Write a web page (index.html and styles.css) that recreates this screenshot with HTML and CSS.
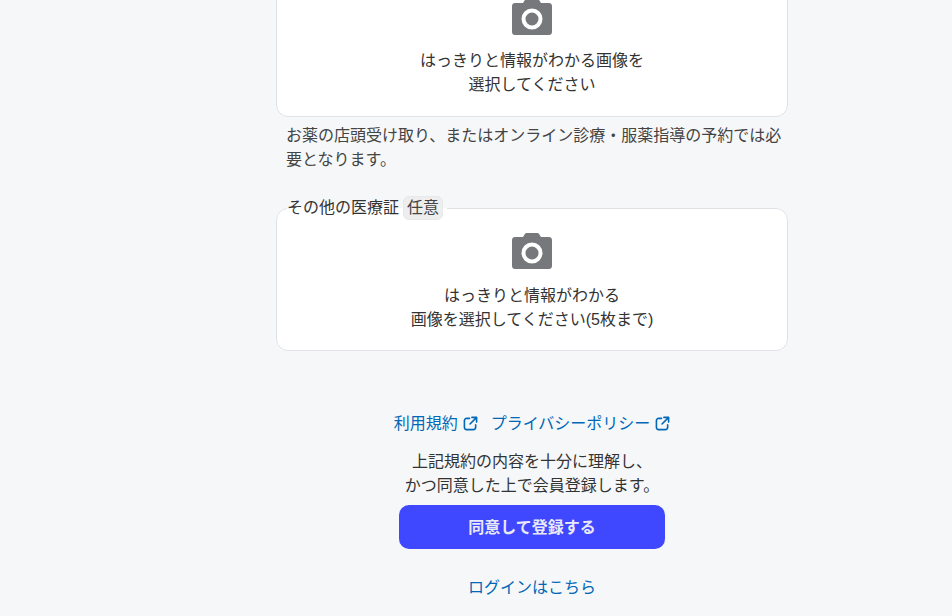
FILE: index.html
```html
<!DOCTYPE html>
<html lang="ja">
<head>
  <meta charset="UTF-8">
  <title>会員登録</title>
  <link rel="stylesheet" href="styles.css">
</head>
<body>
  <svg class="icon-defs" width="0" height="0" aria-hidden="true">
    <symbol id="camera" viewBox="0 0 40 36">
      <path fill-rule="evenodd" d="M3 4h8l1.600-2.600C13.200.5 14 0 15 0h10c1 0 1.800.5 2.400 1.400L29 4h8c1.700 0 3 1.300 3 3v26c0 1.700-1.300 3-3 3H3c-1.700 0-3-1.300-3-3V7c0-1.700 1.300-3 3-3zm17 5.500a10.500 10.500 0 1 0 0 21 10.500 10.500 0 0 0 0-21zm0 4a6.500 6.500 0 1 1 0 13 6.500 6.500 0 0 1 0-13z"/>
    </symbol>
    <symbol id="external" viewBox="0 0 16 16">
      <path fill="none" stroke="currentColor" stroke-width="1.700" stroke-linecap="round" stroke-linejoin="round" d="M7 2.500H4A2.500 2.500 0 0 0 1.500 5v7A2.500 2.500 0 0 0 4 14.500h7a2.500 2.500 0 0 0 2.500-2.500V9.500M9.500 1.500h5v5M14.500 1.500L7.500 8.500"/>
    </symbol>
  </svg>

  <main class="page">
    <fieldset class="upload upload-first">
      <svg class="camera"><use href="#camera"></use></svg>
      <p class="upload-text">はっきりと情報がわかる画像を<br>選択してください</p>
    </fieldset>
    <p class="note">お薬の店頭受け取り、またはオンライン診療・服薬指導の予約では必要となります。</p>

    <fieldset class="upload upload-other">
      <legend class="upload-label">その他の医療証<span class="tag">任意</span></legend>
      <svg class="camera"><use href="#camera"></use></svg>
      <p class="upload-text">はっきりと情報がわかる<br>画像を選択してください(5枚まで)</p>
    </fieldset>

    <div class="terms">
      <div class="terms-links">
        <a class="link" href="#">利用規約<svg class="external"><use href="#external"></use></svg></a>
        <a class="link" href="#">プライバシーポリシー<svg class="external"><use href="#external"></use></svg></a>
      </div>
      <p class="terms-text">上記規約の内容を十分に理解し、<br>かつ同意した上で会員登録します。</p>
      <button class="submit" type="button">同意して登録する</button>
      <a class="link login" href="#">ログインはこちら</a>
    </div>
  </main>
</body>
</html>
```

FILE: styles.css
```css
html, body {
  height: 100%;
  overflow: hidden;
}
body {
  margin: 0;
  padding-left: 276px;
  background: #f6f7f9;
  color: #333;
  font-family: "Liberation Sans", "Noto Sans CJK JP", sans-serif;
  font-size: 16px;
  line-height: 24px;
}
.icon-defs {
  position: absolute;
}
.page {
  width: 512px;
  margin-top: -26px;
}
.upload {
  margin: 0;
  padding: 25px 10px 18px;
  min-width: 0;
  border: 1px solid #e0e2e6;
  border-radius: 12px;
  background: #fff;
}
.upload-first {
  padding-top: 24px;
  padding-bottom: 19px;
}
.upload-other {
  margin-top: 24px;
  padding-top: 13px;
}
.upload-label {
  display: flex;
  align-items: center;
  height: 24px;
  padding: 0 4px 0 0;
  color: #333;
}
.tag {
  margin-left: 4px;
  padding: 0 3px;
  border: 1px solid #e8e8e8;
  border-radius: 6px;
  background: #eee;
  color: #444;
  line-height: 22px;
}
.camera {
  display: block;
  width: 40px;
  height: 36px;
  margin: 0 auto;
  fill: #77787b;
}
.upload-text {
  margin: 15px 0 0;
  text-align: center;
}
.upload-first .upload-text {
  margin-top: 14px;
}
.note {
  margin: 7px 0 0;
  padding: 0 4px 0 10px;
  color: #444;
}
.terms {
  display: flex;
  flex-direction: column;
  align-items: center;
  margin-top: 61px;
}
.terms-links {
  display: flex;
  gap: 13px;
}
.link {
  display: inline-flex;
  align-items: center;
  color: #0068b7;
  text-decoration: none;
}
.external {
  width: 15px;
  height: 15px;
  margin: 0 0 2px 5px;
}
.terms-text {
  margin: 14px 0 7px;
  text-align: center;
}
.submit {
  width: 266px;
  height: 44px;
  padding: 1px 0 0;
  border: 0;
  border-radius: 10px;
  background: #3f48ff;
  color: #e8e9f5;
  font: inherit;
  font-weight: 700;
}
.login {
  margin-top: 27px;
}
```
